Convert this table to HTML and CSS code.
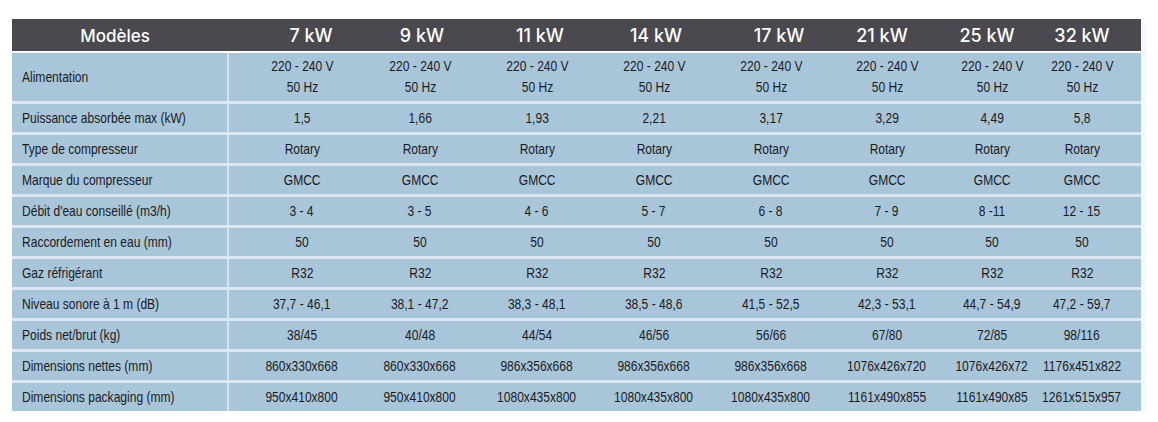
FILE: index.html
```html
<!DOCTYPE html>
<html lang="fr">
<head>
<meta charset="utf-8">
<title>Modèles</title>
<link rel="stylesheet" href="styles.css">
</head>
<body>
<div class="sheet">
  <div class="head">
    <div class="hcell label">Modèles</div>
    <div class="hcell"><span>7 kW</span></div>
    <div class="hcell"><span>9 kW</span></div>
    <div class="hcell"><span>11 kW</span></div>
    <div class="hcell"><span>14 kW</span></div>
    <div class="hcell"><span>17 kW</span></div>
    <div class="hcell"><span>21 kW</span></div>
    <div class="hcell"><span>25 kW</span></div>
    <div class="hcell"><span>32 kW</span></div>
  </div>
  <div class="body">
    <div class="row tall">
      <div class="lbl"><span>Alimentation</span></div>
      <div class="val"><span>220 - 240 V<br>50 Hz</span></div>
      <div class="val"><span>220 - 240 V<br>50 Hz</span></div>
      <div class="val"><span>220 - 240 V<br>50 Hz</span></div>
      <div class="val"><span>220 - 240 V<br>50 Hz</span></div>
      <div class="val"><span>220 - 240 V<br>50 Hz</span></div>
      <div class="val"><span>220 - 240 V<br>50 Hz</span></div>
      <div class="val"><span>220 - 240 V<br>50 Hz</span></div>
      <div class="val"><span>220 - 240 V<br>50 Hz</span></div>
    </div>
    <div class="row">
      <div class="lbl"><span>Puissance absorbée max (kW)</span></div>
      <div class="val"><span>1,5</span></div>
      <div class="val"><span>1,66</span></div>
      <div class="val"><span>1,93</span></div>
      <div class="val"><span>2,21</span></div>
      <div class="val"><span>3,17</span></div>
      <div class="val"><span>3,29</span></div>
      <div class="val"><span>4,49</span></div>
      <div class="val"><span>5,8</span></div>
    </div>
    <div class="row">
      <div class="lbl"><span>Type de compresseur</span></div>
      <div class="val"><span>Rotary</span></div>
      <div class="val"><span>Rotary</span></div>
      <div class="val"><span>Rotary</span></div>
      <div class="val"><span>Rotary</span></div>
      <div class="val"><span>Rotary</span></div>
      <div class="val"><span>Rotary</span></div>
      <div class="val"><span>Rotary</span></div>
      <div class="val"><span>Rotary</span></div>
    </div>
    <div class="row">
      <div class="lbl"><span>Marque du compresseur</span></div>
      <div class="val"><span>GMCC</span></div>
      <div class="val"><span>GMCC</span></div>
      <div class="val"><span>GMCC</span></div>
      <div class="val"><span>GMCC</span></div>
      <div class="val"><span>GMCC</span></div>
      <div class="val"><span>GMCC</span></div>
      <div class="val"><span>GMCC</span></div>
      <div class="val"><span>GMCC</span></div>
    </div>
    <div class="row">
      <div class="lbl"><span>Débit d'eau conseillé (m3/h)</span></div>
      <div class="val"><span>3 - 4</span></div>
      <div class="val"><span>3 - 5</span></div>
      <div class="val"><span>4 - 6</span></div>
      <div class="val"><span>5 - 7</span></div>
      <div class="val"><span>6 - 8</span></div>
      <div class="val"><span>7 - 9</span></div>
      <div class="val"><span>8 -11</span></div>
      <div class="val"><span>12 - 15</span></div>
    </div>
    <div class="row">
      <div class="lbl"><span>Raccordement en eau (mm)</span></div>
      <div class="val"><span>50</span></div>
      <div class="val"><span>50</span></div>
      <div class="val"><span>50</span></div>
      <div class="val"><span>50</span></div>
      <div class="val"><span>50</span></div>
      <div class="val"><span>50</span></div>
      <div class="val"><span>50</span></div>
      <div class="val"><span>50</span></div>
    </div>
    <div class="row">
      <div class="lbl"><span>Gaz réfrigérant</span></div>
      <div class="val"><span>R32</span></div>
      <div class="val"><span>R32</span></div>
      <div class="val"><span>R32</span></div>
      <div class="val"><span>R32</span></div>
      <div class="val"><span>R32</span></div>
      <div class="val"><span>R32</span></div>
      <div class="val"><span>R32</span></div>
      <div class="val"><span>R32</span></div>
    </div>
    <div class="row">
      <div class="lbl"><span>Niveau sonore à 1 m (dB)</span></div>
      <div class="val"><span>37,7 - 46,1</span></div>
      <div class="val"><span>38,1 - 47,2</span></div>
      <div class="val"><span>38,3 - 48,1</span></div>
      <div class="val"><span>38,5 - 48,6</span></div>
      <div class="val"><span>41,5 - 52,5</span></div>
      <div class="val"><span>42,3 - 53,1</span></div>
      <div class="val"><span>44,7 - 54,9</span></div>
      <div class="val"><span>47,2 - 59,7</span></div>
    </div>
    <div class="row">
      <div class="lbl"><span>Poids net/brut (kg)</span></div>
      <div class="val"><span>38/45</span></div>
      <div class="val"><span>40/48</span></div>
      <div class="val"><span>44/54</span></div>
      <div class="val"><span>46/56</span></div>
      <div class="val"><span>56/66</span></div>
      <div class="val"><span>67/80</span></div>
      <div class="val"><span>72/85</span></div>
      <div class="val"><span>98/116</span></div>
    </div>
    <div class="row">
      <div class="lbl"><span>Dimensions nettes (mm)</span></div>
      <div class="val"><span>860x330x668</span></div>
      <div class="val"><span>860x330x668</span></div>
      <div class="val"><span>986x356x668</span></div>
      <div class="val"><span>986x356x668</span></div>
      <div class="val"><span>986x356x668</span></div>
      <div class="val"><span>1076x426x720</span></div>
      <div class="val"><span>1076x426x72</span></div>
      <div class="val"><span>1176x451x822</span></div>
    </div>
    <div class="row">
      <div class="lbl"><span>Dimensions packaging (mm)</span></div>
      <div class="val"><span>950x410x800</span></div>
      <div class="val"><span>950x410x800</span></div>
      <div class="val"><span>1080x435x800</span></div>
      <div class="val"><span>1080x435x800</span></div>
      <div class="val"><span>1080x435x800</span></div>
      <div class="val"><span>1161x490x855</span></div>
      <div class="val"><span>1161x490x85</span></div>
      <div class="val"><span>1261x515x957</span></div>
    </div>
  </div>
</div>
</body>
</html>
```
FILE: styles.css
```css
html, body {
  margin: 0;
  padding: 0;
  background: #ffffff;
}

.sheet {
  width: 1129px;
  margin: 19px 0 0 12px;
  box-shadow: 4px 4px 0 1px #f3f8f8;
}

.head {
  display: grid;
  grid-template-columns: 243px 112px 110px 126px 106px 140px 66px 144px 46px;
  padding-right: 36px;
  height: 32px;
  background: #4a494f;
  color: #ffffff;
  font-family: "Inter", "Open Sans", sans-serif;
  font-weight: 500;
  font-size: 18px;
}

.hcell {
  min-width: 0;
  display: flex;
  align-items: center;
  justify-content: center;
  white-space: nowrap;
  padding-top: 1px;
}

.hcell.label {
  padding-right: 37px;
  font-size: 17px;
}

.body {
  margin-top: 2px;
  display: flex;
  flex-direction: column;
  gap: 3px;
  background: #dce8f1;
}

.row {
  display: grid;
  grid-template-columns: 217px 146px 90px 144px 90px 144px 88px 122px 58px;
  padding-right: 30px;
  height: 28px;
  background: #a9c5d9;
  color: #1a1b1e;
  font-family: "Liberation Sans", Arial, sans-serif;
  font-size: 14.5px;
}

.row.tall {
  height: 48px;
}

.lbl {
  box-sizing: border-box;
  display: flex;
  align-items: center;
  padding-left: 10px;
  border-right: 2px solid #d4e3ee;
  white-space: nowrap;
}

.lbl span {
  display: inline-block;
  transform: scaleX(0.83);
  transform-origin: left center;
}

.val {
  min-width: 0;
  display: flex;
  align-items: center;
  justify-content: center;
  white-space: nowrap;
  text-align: center;
}

.val span {
  display: inline-block;
  transform: scaleX(0.83);
  transform-origin: center center;
}

.row.tall .val {
  line-height: 21px;
}
```
